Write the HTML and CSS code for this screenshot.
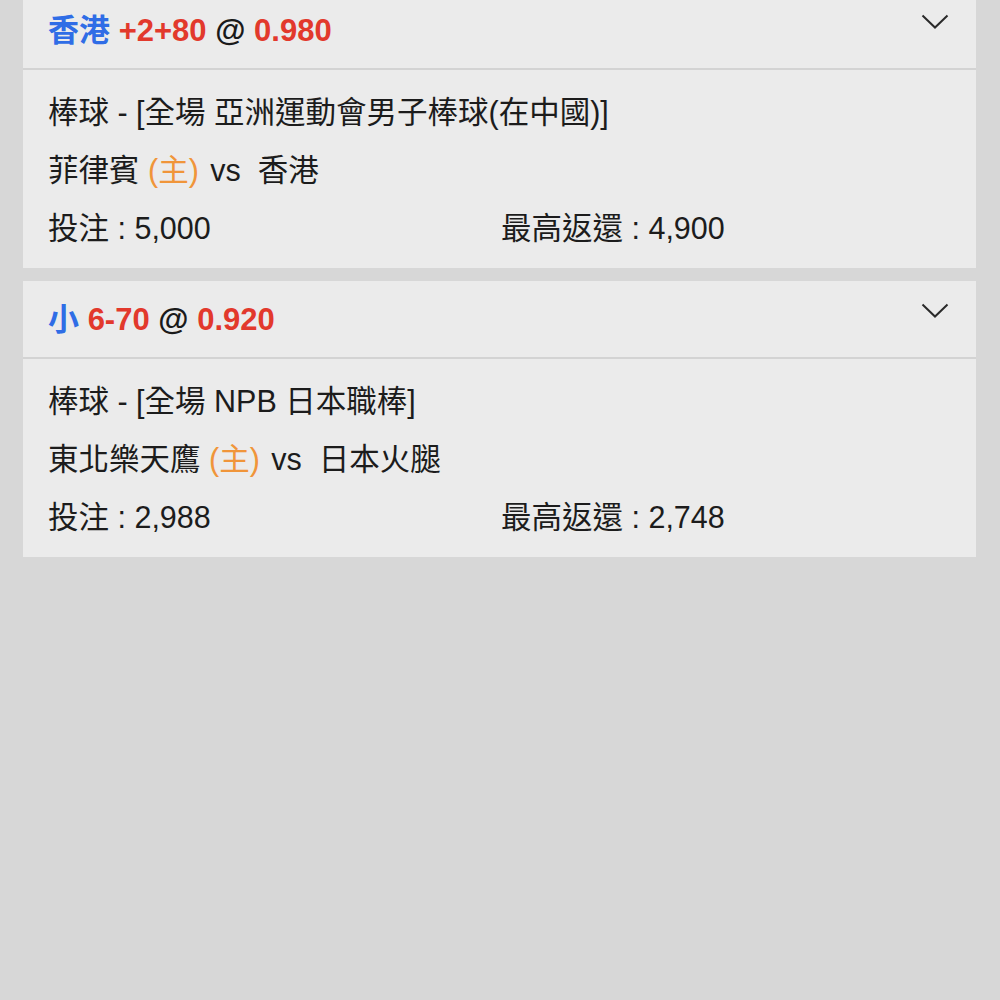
FILE: index.html
```html
<!DOCTYPE html>
<html lang="zh-Hant">
<head>
<meta charset="utf-8">
<link rel="stylesheet" href="styles.css">
</head>
<body>
<div class="list">
  <div class="card card-first">
    <div class="head">
      <div class="title"><span class="blue">香港</span> <span class="red">+2+80</span> <span class="at">@</span> <span class="red">0.980</span></div>
      <svg class="chev" width="28" height="16" viewBox="0 0 28 16"><path d="M1.5 1.5 L14 13.5 L26.5 1.5" fill="none" stroke="#2a2a2a" stroke-width="2"/></svg>
    </div>
    <div class="body">
      <div class="line">棒球 - [全場 亞洲運動會男子棒球(在中國)]</div>
      <div class="line">菲律賓 <span class="orange">(主)</span> vs&nbsp; 香港</div>
      <div class="line row"><span>投注 : 5,000</span><span>最高返還 : 4,900</span></div>
    </div>
  </div>
  <div class="card">
    <div class="head">
      <div class="title"><span class="blue">小</span> <span class="red">6-70</span> <span class="at">@</span> <span class="red">0.920</span></div>
      <svg class="chev" width="28" height="16" viewBox="0 0 28 16"><path d="M1.5 1.5 L14 13.5 L26.5 1.5" fill="none" stroke="#2a2a2a" stroke-width="2"/></svg>
    </div>
    <div class="body">
      <div class="line">棒球 - [全場 NPB 日本職棒]</div>
      <div class="line">東北樂天鷹 <span class="orange">(主)</span> vs&nbsp; 日本火腿</div>
      <div class="line row"><span>投注 : 2,988</span><span>最高返還 : 2,748</span></div>
    </div>
  </div>
</div>
</body>
</html>
```

FILE: styles.css
```css
html, body {
  margin: 0;
  padding: 0;
  background: #d7d7d7;
  height: 100%;
  overflow: hidden;
}
body {
  font-family: "Liberation Sans", "Noto Sans CJK TC", sans-serif;
  color: #1c1c1c;
}
.list {
  padding: 0 24px 0 23px;
  display: flex;
  flex-direction: column;
  gap: 13px;
}
.card {
  background: #ebebeb;
}
.card-first {
  margin-top: -8px;
}
.head {
  height: 76px;
  border-bottom: 2px solid #d3d3d3;
  display: flex;
  justify-content: space-between;
  align-items: center;
  padding: 0 27px 0 25px;
}
.title {
  font-size: 31px;
  font-weight: bold;
  line-height: 1;
  margin-top: 0;
}
.blue { color: #2f6de6; }
.red { color: #e2392c; }
.at { color: #1a1a1a; }
.chev {
  align-self: flex-start;
  margin-top: 22px;
}
.body {
  padding: 13px 22px 11px 25px;
}
.line {
  font-size: 30.5px;
  line-height: 58px;
  white-space: nowrap;
}
.orange { color: #f0953a; margin-right: 3px; }
.row {
  display: grid;
  grid-template-columns: 1fr 1fr;
}
```
